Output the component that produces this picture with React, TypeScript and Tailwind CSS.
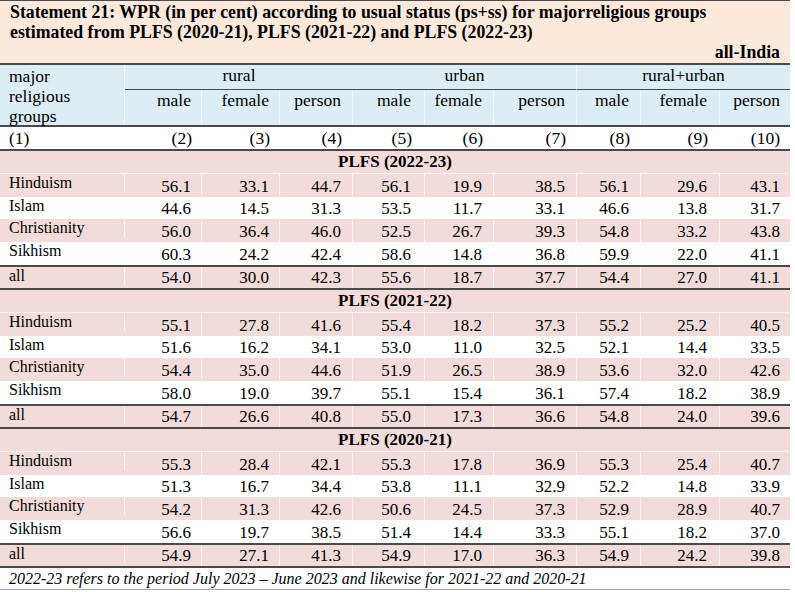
const cols = "grid grid-cols-[125px_77px_78px_73px_72px_69px_83px_64px_79px_70px]";

// right padding per numeric column, so text ends line up with the source
const pr = [
  "pr-[10px]",
  "pr-[10px]",
  "pr-[11px]",
  "pr-[13px]",
  "pr-[11px]",
  "pr-[11px]",
  "pr-[11px]",
  "pr-[12px]",
  "pr-[10px]",
];

const line = "h-[2px] bg-[#4a4a4a]";

type Row = [string, string[]];
type Section = { title: string; rows: Row[] };

const sections: Section[] = [
  {
    title: "PLFS (2022-23)",
    rows: [
      ["Hinduism", ["56.1", "33.1", "44.7", "56.1", "19.9", "38.5", "56.1", "29.6", "43.1"]],
      ["Islam", ["44.6", "14.5", "31.3", "53.5", "11.7", "33.1", "46.6", "13.8", "31.7"]],
      ["Christianity", ["56.0", "36.4", "46.0", "52.5", "26.7", "39.3", "54.8", "33.2", "43.8"]],
      ["Sikhism", ["60.3", "24.2", "42.4", "58.6", "14.8", "36.8", "59.9", "22.0", "41.1"]],
      ["all", ["54.0", "30.0", "42.3", "55.6", "18.7", "37.7", "54.4", "27.0", "41.1"]],
    ],
  },
  {
    title: "PLFS (2021-22)",
    rows: [
      ["Hinduism", ["55.1", "27.8", "41.6", "55.4", "18.2", "37.3", "55.2", "25.2", "40.5"]],
      ["Islam", ["51.6", "16.2", "34.1", "53.0", "11.0", "32.5", "52.1", "14.4", "33.5"]],
      ["Christianity", ["54.4", "35.0", "44.6", "51.9", "26.5", "38.9", "53.6", "32.0", "42.6"]],
      ["Sikhism", ["58.0", "19.0", "39.7", "55.1", "15.4", "36.1", "57.4", "18.2", "38.9"]],
      ["all", ["54.7", "26.6", "40.8", "55.0", "17.3", "36.6", "54.8", "24.0", "39.6"]],
    ],
  },
  {
    title: "PLFS (2020-21)",
    rows: [
      ["Hinduism", ["55.3", "28.4", "42.1", "55.3", "17.8", "36.9", "55.3", "25.4", "40.7"]],
      ["Islam", ["51.3", "16.7", "34.4", "53.8", "11.1", "32.9", "52.2", "14.8", "33.9"]],
      ["Christianity", ["54.2", "31.3", "42.6", "50.6", "24.5", "37.3", "52.9", "28.9", "40.7"]],
      ["Sikhism", ["56.6", "19.7", "38.5", "51.4", "14.4", "33.3", "55.1", "18.2", "37.0"]],
      ["all", ["54.9", "27.1", "41.3", "54.9", "17.0", "36.3", "54.9", "24.2", "39.8"]],
    ],
  },
];

const subHeads = ["male", "female", "person", "male", "female", "person", "male", "female", "person"];
const heights = ["h-[23px]", "h-[22px]", "h-[23px]", "h-[23px]"];

function DataRow({ label, values, bg, h }: { label: string; values: string[]; bg: string; h: string }) {
  return (
    <div className={`${cols} ${bg} ${h}`}>
      <div className="border-r border-white/60 pl-[9px] text-[16px] leading-[18px] self-start">{label}</div>
      {values.map((v, i) => (
        <div
          key={i}
          className={`flex h-full items-end justify-end text-[17px] leading-[20px] ${pr[i]} ${
            i < 8 ? "border-r border-white/60" : ""
          }`}
        >
          {v}
        </div>
      ))}
    </div>
  );
}

function TableSection({ section }: { section: Section }) {
  const body = section.rows.slice(0, 4);
  const all = section.rows[4];
  return (
    <>
      <div className="flex h-[23px] justify-center border-b border-white/60 bg-[#f2dcdb] text-[17px] font-bold leading-[21px]">
        {section.title}
      </div>
      {body.map(([label, values], i) => (
        <DataRow
          key={label}
          label={label}
          values={values}
          bg={i % 2 === 0 ? "bg-[#f2dcdb]" : "bg-white"}
          h={heights[i]}
        />
      ))}
      <div className={line} />
      <DataRow label={all[0]} values={all[1]} bg="bg-[#f2dcdb]" h="h-[21px]" />
      <div className={line} />
    </>
  );
}

export default function App() {
  return (
    <div className="w-[790px] bg-white font-['Liberation_Serif','Times_New_Roman',serif] text-black">
      <div className="h-[63px] border-t border-[#4a4a4a] bg-[#fde9d9] pl-[10px] pr-[10px] pt-[1px] text-[17.8px] font-bold leading-[20px]">
        <p>Statement 21: WPR (in per cent) according to usual status (ps+ss) for majorreligious groups</p>
        <p>estimated from PLFS (2020-21), PLFS (2021-22) and PLFS (2022-23)</p>
        <p className="text-right">all-India</p>
      </div>

      <div className={line} />
      <div className={`${cols} grid-rows-[25px_35px] bg-[#daeef3] text-[17.5px] leading-[20px]`}>
        <div className="row-span-2 border-r border-white/60 pl-[9px] pt-[1px]">
          major
          <br />
          religious
          <br />
          groups
        </div>
        <div className="col-span-3 border-b border-[#4a4a4a] text-center">rural</div>
        <div className="col-span-3 border-b border-r border-[#4a4a4a] border-r-white/60 text-center">urban</div>
        <div className="col-span-3 border-b border-[#4a4a4a] text-center">rural+urban</div>
        {subHeads.map((s, i) => (
          <div key={i} className={`text-right ${pr[i]} ${i < 8 ? "border-r border-white/60" : ""}`}>
            {s}
          </div>
        ))}
      </div>
      <div className={line} />

      <div className={`${cols} h-[22px] bg-white text-[17.5px] leading-[22px]`}>
        <div className="pl-[9px]">(1)</div>
        {[2, 3, 4, 5, 6, 7, 8, 9, 10].map((n, i) => (
          <div key={n} className={`text-right ${pr[i]}`}>
            ({n})
          </div>
        ))}
      </div>
      <div className={line} />

      {sections.map((s) => (
        <TableSection key={s.title} section={s} />
      ))}

      <div className="h-[22px] border-b border-[#a6a6a6] pl-[9px] text-[16px] italic leading-[22px]">
        2022-23 refers to the period July 2023 – June 2023 and likewise for 2021-22 and 2020-21
      </div>
    </div>
  );
}
